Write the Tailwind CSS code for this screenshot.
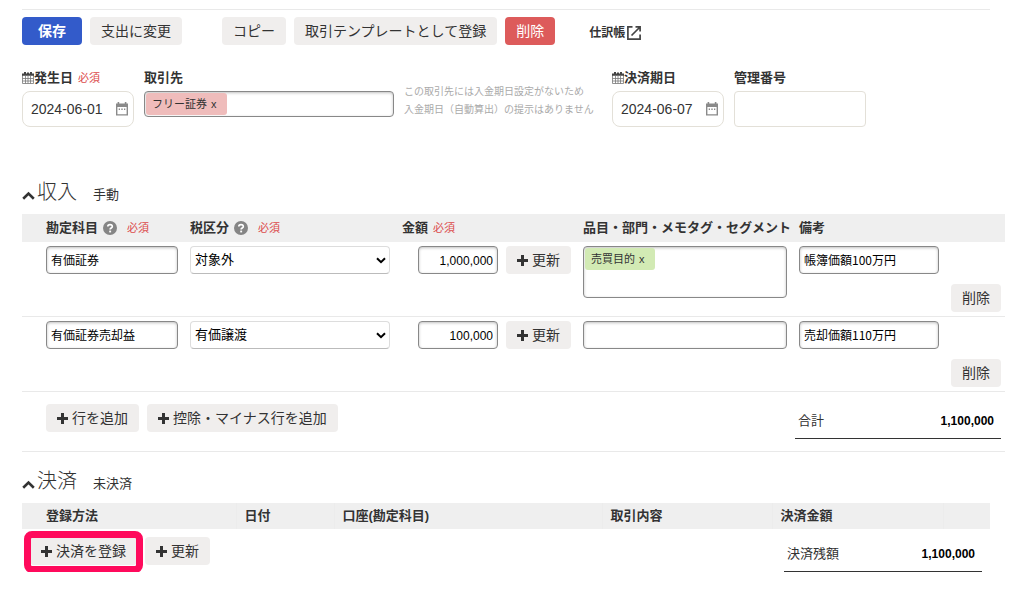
<!DOCTYPE html>
<html lang="ja">
<head>
  <meta charset="UTF-8" />
  <meta name="viewport" content="width=device-width, initial-scale=1.0"/>
  <title>取引の編集</title>
  <script src="https://cdn.jsdelivr.net/npm/@tailwindcss/browser@4"></script>
</head>
<body class="bg-white text-[#333] text-[13px] leading-5 font-['Liberation_Sans','Noto_Sans_CJK_JP',sans-serif]">
  <!-- Shared icons -->
  <svg class="hidden">
    <symbol id="plus" viewBox="0 0 11 11"><path d="M4 0h3v4h4v3H7v4H4V7H0V4h4z" fill="currentColor"/></symbol>
    <symbol id="help" viewBox="0 0 14 14">
      <circle cx="7" cy="7" r="7" fill="#858585"/>
      <path d="M4.8 5.5C4.8 3.1 9.3 3 9.3 5.4C9.3 7 7.1 6.9 7.1 8.5" fill="none" stroke="#fff" stroke-width="1.7"/>
      <path d="M6.2 9.6h1.9v1.8H6.2z" fill="#fff"/>
    </symbol>
    <symbol id="chevron" viewBox="0 0 13 9"><path d="M1.2 7.8L6.5 2.6L11.8 7.8" fill="none" stroke="currentColor" stroke-width="2.6"/></symbol>
    <symbol id="grid-calendar" viewBox="0 0 12 12">
      <path d="M.5 2.5h11v9H.5zM3.5 4v7.5M6 4v7.5M8.5 4v7.5M.5 6.5h11M.5 9h11" fill="none" stroke="#777" stroke-width=".8"/>
      <path d="M0 1.6h12v2.2H0zM2 0h2v3H2zM8 0h2v3H8zM5 .4h2v2H5z" fill="#444"/>
    </symbol>
    <symbol id="calendar" viewBox="0 0 12 14">
      <path d="M.7 3h10.6v9.9H.7z" fill="none" stroke="#8a8a8a" stroke-width="1.4"/>
      <path d="M0 1.6h12V5H0zM1.6 0h1.6v2.5H1.6zM8.8 0h1.6v2.5H8.8zM2.7 6.6H4v1.3H2.7zM5.3 6.6h1.4v1.3H5.3zM8 6.6h1.3v1.3H8z" fill="#8a8a8a"/>
    </symbol>
    <symbol id="external" viewBox="0 0 14 14">
      <path d="M5.5.9H.9v12.2h12.2V8.5M8.5 .9h4.6V5.5M13 1L4.5 9.5" fill="none" stroke="#444" stroke-width="1.7"/>
    </symbol>
    <symbol id="down" viewBox="0 0 10 7"><path d="M1 1.2L5 5.2L9 1.2" fill="none" stroke="#000" stroke-width="2"/></symbol>
  </svg>

  <main class="pl-[22px] pr-[30px] pt-[9px]">
    <!-- Actions -->
    <div class="mr-[15px] pt-[7px] border-t border-[#e9e9e9] flex items-center gap-2 text-[14px]">
      <button class="h-7 px-4 rounded bg-[#335bca] text-white font-bold">保存</button>
      <button class="h-7 px-[11px] rounded bg-[#f0eeed]">支出に変更</button>
      <button class="h-7 px-[11px] ml-8 rounded bg-[#f0eeed]">コピー</button>
      <button class="h-7 px-[11px] rounded bg-[#f0eeed]">取引テンプレートとして登録</button>
      <button class="h-7 px-[11px] rounded bg-[#dd5b5b] text-white">削除</button>
      <a href="#" class="ml-[26px] mt-1 flex items-center text-[12px] font-bold gap-0.5">仕訳帳<svg class="size-[14px]"><use href="#external"/></svg></a>
    </div>

    <!-- Basic fields -->
    <div class="mt-[23px] flex items-start gap-[10px]">
      <div class="w-[112px]">
        <label for="issue-date" class="flex items-center h-5 font-bold"><svg class="size-3"><use href="#grid-calendar"/></svg>発生日<span class="ml-[5px] text-[11px] font-normal text-[#dc4b4b]">必須</span></label>
        <div class="mt-[3px] h-9 px-2 flex items-center border border-[#e3e0d8] rounded-lg">
          <input id="issue-date" type="text" value="2024-06-01" class="min-w-0 flex-1 text-[14px] outline-none">
          <svg class="w-3 h-[14px] mr-[-3px] shrink-0"><use href="#calendar"/></svg>
        </div>
      </div>
      <div class="w-[250px]">
        <label for="partner" class="block h-5 font-bold">取引先</label>
        <div class="mt-[3px] h-[26px] p-px flex items-center border border-[#888] rounded shadow-[inset_0_1px_3px_rgba(0,0,0,0.25)]">
          <button class="h-[22px] pl-[6px] pr-[10px] rounded-[3px] bg-[#efbcbb] text-[11px] flex items-center gap-1 shrink-0"><span>フリー証券</span><span>x</span></button>
          <input id="partner" type="text" class="min-w-0 flex-1 outline-none">
        </div>
      </div>
      <p class="w-[198px] mt-[15px] text-[10px] leading-[18px] text-[#aaa]">この取引先には入金期日設定がないため<br>入金期日（自動算出）の提示はありません</p>
      <div class="w-[112px]">
        <label for="due-date" class="flex items-center h-5 font-bold"><svg class="size-3"><use href="#grid-calendar"/></svg>決済期日</label>
        <div class="mt-[3px] h-9 px-2 flex items-center border border-[#e3e0d8] rounded-lg">
          <input id="due-date" type="text" value="2024-06-07" class="min-w-0 flex-1 text-[14px] outline-none">
          <svg class="w-3 h-[14px] mr-[-3px] shrink-0"><use href="#calendar"/></svg>
        </div>
      </div>
      <div class="w-[132px]">
        <label for="ref-number" class="block h-5 font-bold">管理番号</label>
        <input id="ref-number" type="text" class="block mt-[3px] w-full h-9 px-2 border border-[#e3e0d8] rounded">
      </div>
    </div>

    <!-- Income -->
    <section class="mt-[51px]">
      <div class="h-7 mb-2 flex items-center">
        <svg class="w-[13px] h-[9px] mt-1.5 mr-0.5"><use href="#chevron"/></svg>
        <h2 class="text-[20px] leading-7 font-light">収入</h2>
        <span class="ml-4 mt-1.5">手動</span>
      </div>
      <table class="w-full table-fixed border-separate border-spacing-0 text-left">
        <colgroup>
          <col class="w-[168px]"><col class="w-[212px]"><col class="w-[181px]"><col class="w-[216px]"><col><col class="w-[60px]">
        </colgroup>
        <thead>
          <tr class="h-7 bg-[#efefef]">
            <th class="pl-6"><div class="flex items-center">勘定科目<svg class="ml-[5px] mr-[10px] size-[14px]"><use href="#help"/></svg><span class="text-[11px] font-normal text-[#dc4b4b]">必須</span></div></th>
            <th><div class="flex items-center">税区分<svg class="ml-[5px] mr-[10px] size-[14px]"><use href="#help"/></svg><span class="text-[11px] font-normal text-[#dc4b4b]">必須</span></div></th>
            <th><div class="flex items-center">金額<span class="ml-[5px] text-[11px] font-normal text-[#dc4b4b]">必須</span></div></th>
            <th class="whitespace-nowrap">品目・部門・メモタグ・セグメント</th>
            <th>備考</th>
            <th></th>
          </tr>
        </thead>
        <tbody class="text-black">
          <tr class="h-[75px] align-top">
            <td class="pl-6 pt-1 border-b border-[#e9e9e9]"><input type="text" aria-label="勘定科目" value="有価証券" class="block w-[132px] h-7 px-1 pb-0.5 text-[12px] border border-[#888] rounded shadow-[inset_0_1px_3px_rgba(0,0,0,0.25)]"></td>
            <td class="pt-1 border-b border-[#e9e9e9]">
              <div class="relative w-[200px]">
                <select aria-label="税区分" class="block w-full h-7 px-1 appearance-none border border-[#ddd] border-b-[#bbb] rounded"><option>対象外</option></select>
                <svg class="absolute right-1 top-[11px] w-[10px] h-[7px] pointer-events-none"><use href="#down"/></svg>
              </div>
            </td>
            <td class="pl-4 pt-1 border-b border-[#e9e9e9]">
              <div class="flex gap-2">
                <input type="text" aria-label="金額" value="1,000,000" class="w-20 h-7 px-1 pt-0.5 text-[12px] text-right border border-[#888] rounded shadow-[inset_0_1px_3px_rgba(0,0,0,0.25)]">
                <button class="h-7 px-[11px] rounded bg-[#f0eeed] text-[#333] text-[14px] flex items-center gap-1"><svg class="size-[11px]"><use href="#plus"/></svg>更新</button>
              </div>
            </td>
            <td class="pt-1 border-b border-[#e9e9e9]">
              <div class="w-[204px] h-[52px] p-px flex items-start border border-[#888] rounded shadow-[inset_0_1px_3px_rgba(0,0,0,0.25)]">
                <button class="h-[22px] pl-[6px] pr-[10px] rounded-[3px] bg-[#d2eab4] text-[#333] text-[11px] flex items-center gap-1 shrink-0"><span>売買目的</span><span>x</span></button>
                <input type="text" aria-label="品目・部門・メモタグ・セグメント" class="min-w-0 flex-1 outline-none">
              </div>
            </td>
            <td class="pt-1 border-b border-[#e9e9e9]"><input type="text" aria-label="備考" value="帳簿価額100万円" class="block w-[140px] h-7 px-1 pb-0.5 text-[12px] font-['Noto_Sans_CJK_JP',sans-serif] border border-[#888] rounded shadow-[inset_0_1px_3px_rgba(0,0,0,0.25)]"></td>
            <td class="align-bottom pb-1 pr-1 border-b border-[#e9e9e9]"><button class="block ml-auto h-7 px-[11px] rounded bg-[#f0eeed] text-[#333] text-[14px]">削除</button></td>
          </tr>
          <tr class="h-[75px] align-top">
            <td class="pl-6 pt-1 border-b border-[#e9e9e9]"><input type="text" aria-label="勘定科目" value="有価証券売却益" class="block w-[132px] h-7 px-1 pb-0.5 text-[12px] border border-[#888] rounded shadow-[inset_0_1px_3px_rgba(0,0,0,0.25)]"></td>
            <td class="pt-1 border-b border-[#e9e9e9]">
              <div class="relative w-[200px]">
                <select aria-label="税区分" class="block w-full h-7 px-1 appearance-none border border-[#ddd] border-b-[#bbb] rounded"><option>有価譲渡</option></select>
                <svg class="absolute right-1 top-[11px] w-[10px] h-[7px] pointer-events-none"><use href="#down"/></svg>
              </div>
            </td>
            <td class="pl-4 pt-1 border-b border-[#e9e9e9]">
              <div class="flex gap-2">
                <input type="text" aria-label="金額" value="100,000" class="w-20 h-7 px-1 pt-0.5 text-[12px] text-right border border-[#888] rounded shadow-[inset_0_1px_3px_rgba(0,0,0,0.25)]">
                <button class="h-7 px-[11px] rounded bg-[#f0eeed] text-[#333] text-[14px] flex items-center gap-1"><svg class="size-[11px]"><use href="#plus"/></svg>更新</button>
              </div>
            </td>
            <td class="pt-1 border-b border-[#e9e9e9]"><input type="text" aria-label="品目・部門・メモタグ・セグメント" class="block w-[204px] h-7 px-1 border border-[#888] rounded shadow-[inset_0_1px_3px_rgba(0,0,0,0.25)]"></td>
            <td class="pt-1 border-b border-[#e9e9e9]"><input type="text" aria-label="備考" value="売却価額110万円" class="block w-[140px] h-7 px-1 pb-0.5 text-[12px] font-['Noto_Sans_CJK_JP',sans-serif] border border-[#888] rounded shadow-[inset_0_1px_3px_rgba(0,0,0,0.25)]"></td>
            <td class="align-bottom pb-1 pr-1 border-b border-[#e9e9e9]"><button class="block ml-auto h-7 px-[11px] rounded bg-[#f0eeed] text-[#333] text-[14px]">削除</button></td>
          </tr>
        </tbody>
      </table>
      <div class="pl-6 pr-1 pt-3 pb-3 flex items-start justify-between border-b border-[#e9e9e9]">
        <div class="flex gap-2 text-[14px]">
          <button class="h-7 px-[11px] rounded bg-[#f0eeed] flex items-center gap-1"><svg class="size-[11px]"><use href="#plus"/></svg>行を追加</button>
          <button class="h-7 px-[11px] rounded bg-[#f0eeed] flex items-center gap-1"><svg class="size-[11px]"><use href="#plus"/></svg>控除・マイナス行を追加</button>
        </div>
        <div class="w-[206px] h-[35px] pl-[3px] pr-[7px] pt-[7px] flex items-start justify-between border-b border-[#333]">
          <span>合計</span>
          <span class="text-[12px] font-bold text-black">1,100,000</span>
        </div>
      </div>
    </section>

    <!-- Settlement -->
    <section class="mt-[15px] mr-[15px]">
      <div class="h-7 mb-2 flex items-center">
        <svg class="w-[13px] h-[9px] mt-1.5 mr-0.5"><use href="#chevron"/></svg>
        <h2 class="text-[20px] leading-7 font-light">決済</h2>
        <span class="ml-4 mt-1.5">未決済</span>
      </div>
      <table class="w-full table-fixed text-left">
        <colgroup>
          <col class="w-[214px]"><col class="w-[98px]"><col class="w-[268px]"><col class="w-[170px]"><col><col class="w-[47px]">
        </colgroup>
        <thead>
          <tr class="h-[26px] bg-[#efefef]">
            <th class="pl-6">登録方法</th>
            <th class="pl-2 border-l border-[#ececec]">日付</th>
            <th class="pl-2 border-l border-[#ececec]">口座(勘定科目)</th>
            <th class="pl-2 border-l border-[#ececec]">取引内容</th>
            <th class="pl-2 border-l border-[#ececec]">決済金額</th>
            <th class="border-l border-[#ececec]"></th>
          </tr>
        </thead>
      </table>
      <div class="px-2 pt-2 flex items-start justify-between">
        <div class="flex gap-2 text-[14px]">
          <div class="relative">
            <button class="h-7 px-[11px] rounded bg-[#f0eeed] flex items-center gap-1"><svg class="size-[11px]"><use href="#plus"/></svg>決済を登録</button>
            <span class="absolute -inset-x-1.5 -top-1.5 -bottom-2 border-[7px] border-[#ff0a5c] rounded-lg pointer-events-none"></span>
          </div>
          <button class="h-7 px-[11px] rounded bg-[#f0eeed] flex items-center gap-1"><svg class="size-[11px]"><use href="#plus"/></svg>更新</button>
        </div>
        <div class="w-[198px] h-[35px] pl-[3px] pr-[7px] pt-[7px] flex items-start justify-between border-b border-[#333]">
          <span>決済残額</span>
          <span class="text-[12px] font-bold text-black">1,100,000</span>
        </div>
      </div>
    </section>
  </main>
</body>
</html>
